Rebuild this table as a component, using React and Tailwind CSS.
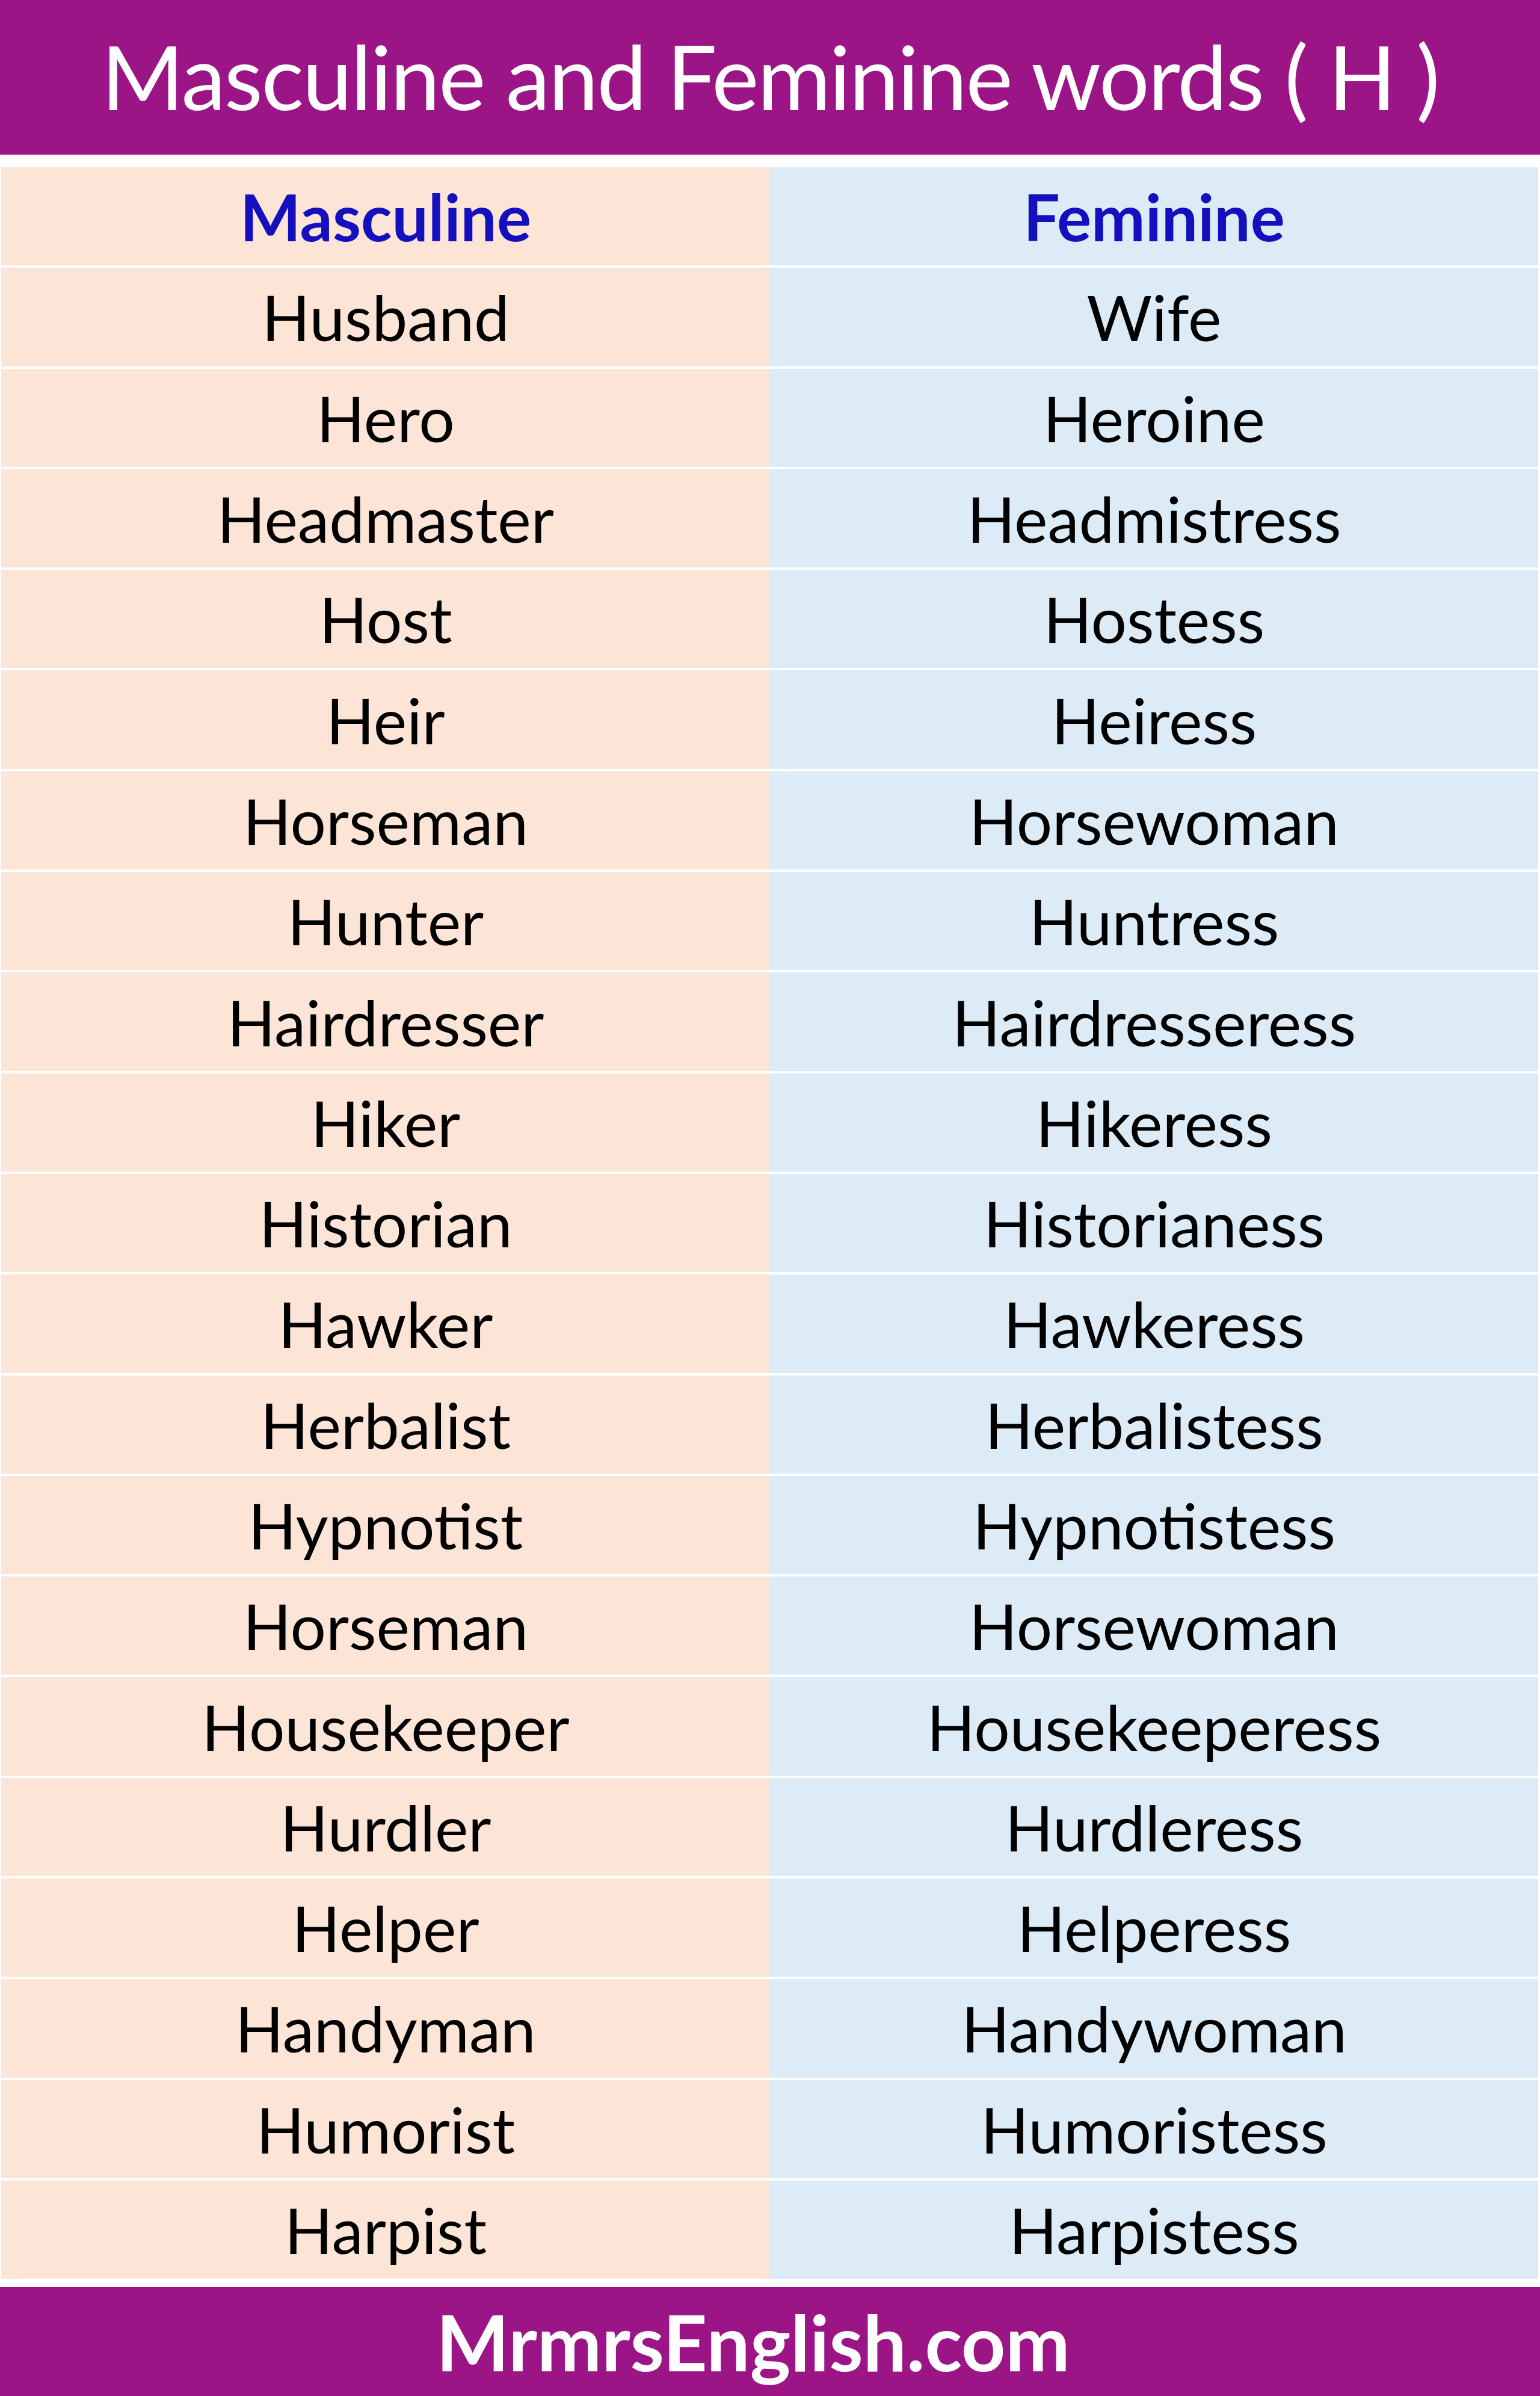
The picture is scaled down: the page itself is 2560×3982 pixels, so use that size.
import React from "react";

const rows = [
  ["Husband", "Wife"],
  ["Hero", "Heroine"],
  ["Headmaster", "Headmistress"],
  ["Host", "Hostess"],
  ["Heir", "Heiress"],
  ["Horseman", "Horsewoman"],
  ["Hunter", "Huntress"],
  ["Hairdresser", "Hairdresseress"],
  ["Hiker", "Hikeress"],
  ["Historian", "Historianess"],
  ["Hawker", "Hawkeress"],
  ["Herbalist", "Herbalistess"],
  ["Hypnotist", "Hypnotistess"],
  ["Horseman", "Horsewoman"],
  ["Housekeeper", "Housekeeperess"],
  ["Hurdler", "Hurdleress"],
  ["Helper", "Helperess"],
  ["Handyman", "Handywoman"],
  ["Humorist", "Humoristess"],
  ["Harpist", "Harpistess"],
];

function Row({ left, right, head }) {
  const txt = head
    ? "font-bold text-[#1410bf] text-[107px]"
    : "font-normal text-black text-[105px]";
  return (
    <div className="grid grid-cols-[1278px_1277px] h-[163.3px]">
      <div className={`bg-[#fce4d6] flex items-center justify-center leading-none ${txt}`}>
        {left}
      </div>
      <div className={`bg-[#ddebf7] flex items-center justify-center leading-none ${txt}`}>
        {right}
      </div>
    </div>
  );
}

export default function App() {
  return (
    <div
      className="w-[2560px] h-[3982px] bg-white flex flex-col"
      style={{ fontFamily: "Lato, 'Open Sans', sans-serif" }}
    >
      <div className="h-[257px] shrink-0 bg-[#9c1586] flex items-center justify-center">
        <div
          className="text-white text-[148px] leading-none tracking-[-2.3px] pb-[6px]"
          style={{ fontFamily: "'Comic Sans MS', Lato, sans-serif" }}
        >
          Masculine and Feminine words ( H )
        </div>
      </div>
      <div className="mt-[21px] pl-[2px] pr-[3px] flex flex-col gap-[4px]">
        <Row left="Masculine" right="Feminine" head />
        {rows.map((r, i) => (
          <Row key={i} left={r[0]} right={r[1]} />
        ))}
      </div>
      <div className="mt-[14px] flex-1 bg-[#9c1586] flex items-center justify-center pr-[56px]">
        <div className="text-white font-bold text-[128px] leading-none">
          MrmrsEnglish.com
        </div>
      </div>
    </div>
  );
}
